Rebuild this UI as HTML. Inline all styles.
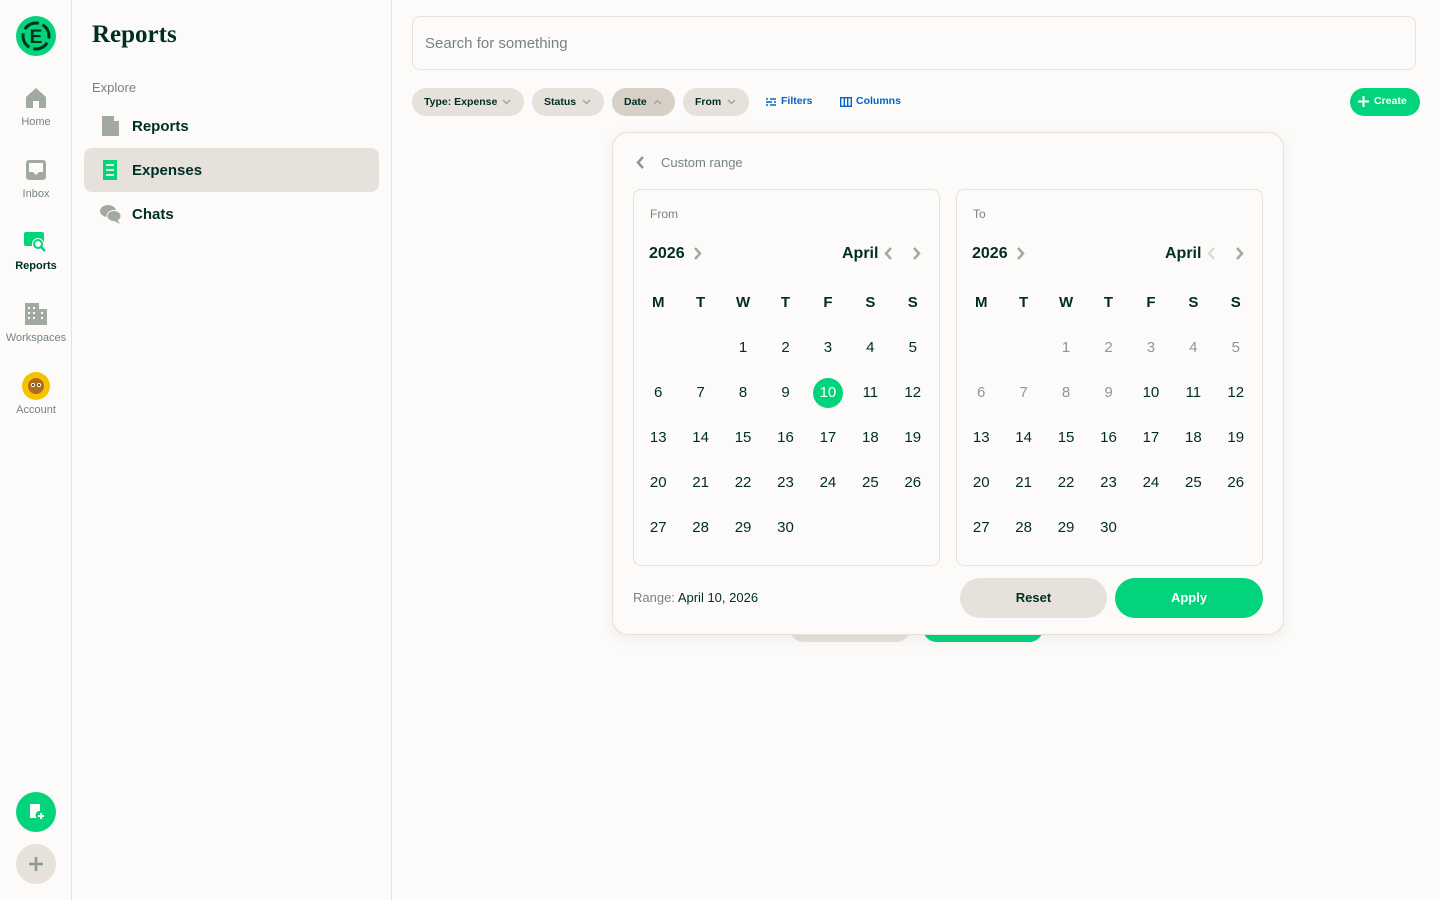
<!DOCTYPE html>
<html><head><meta charset="utf-8"><style>
*{box-sizing:border-box;margin:0;padding:0}
body{width:1440px;height:900px;background:#fcfbf9;font-family:"Liberation Sans",sans-serif;color:#002e22;position:relative;overflow:hidden}
.a{position:absolute}
.nav{left:0;top:0;width:72px;height:900px;border-right:1px solid #e6e1da}
.side{left:72px;top:0;width:320px;height:900px;border-right:1px solid #e6e1da}
.nl{position:absolute;left:0;width:72px;text-align:center;font-size:11px;color:#76847e}
.chip{position:absolute;top:88px;height:28px;border-radius:14px;background:#e6e1da;font-size:10.5px;font-weight:bold;line-height:28px;padding-left:12px}
.chip svg{position:absolute;top:11px}
.card{position:absolute;top:189px;width:307px;height:377px;border:1px solid #e6e1da;border-radius:8px}
.grid{position:absolute;top:280px;width:297px;display:grid;grid-template-columns:repeat(7,1fr);grid-auto-rows:45px;font-size:15px;text-align:center;line-height:45px}
.grid b{font-weight:bold}
.g{color:#8a9a93}
.sel{display:inline-block;width:30px;height:30px;border-radius:15px;background:#03d47c;color:#fff;line-height:30px;margin-top:7.5px}
</style></head><body>
<div class="a nav">
 <svg class="a" style="left:16px;top:16px" width="40" height="40" viewBox="0 0 40 40"><circle cx="20" cy="20" r="20" fill="#03d47c"/><circle cx="20" cy="20" r="13" stroke="#002e22" stroke-width="3" fill="none" stroke-dasharray="16 4.4" transform="rotate(-60 20 20)"/><text x="20" y="27" text-anchor="middle" font-family="Liberation Sans" font-weight="bold" font-size="19" fill="#002e22">E</text></svg>
 <svg class="a" style="left:25px;top:87px" width="22" height="22" viewBox="0 0 22 22"><path d="M11 1L1 10v11h7v-7h6v7h7V10z" fill="#a2a9a3"/></svg>
 <div class="nl" style="top:116px">Home</div>
 <svg class="a" style="left:25px;top:159px" width="22" height="22" viewBox="0 0 22 22"><rect x="1" y="1" width="20" height="20" rx="3" fill="#a2a9a3"/><path d="M4 4h14v9h-4l-3 3-3-3H4z" fill="#fcfbf9"/></svg>
 <div class="nl" style="top:188px">Inbox</div>
 <svg class="a" style="left:24px;top:231px" width="24" height="24" viewBox="0 0 24 24"><rect x="0" y="1" width="20" height="14" rx="2" fill="#03d47c"/><circle cx="14" cy="13" r="6" fill="#fcfbf9"/><circle cx="14" cy="13" r="4" fill="none" stroke="#03d47c" stroke-width="2"/><path d="M17 16l4 4" stroke="#03d47c" stroke-width="2.5"/></svg>
 <div class="nl" style="top:260px;color:#002e22;font-weight:bold">Reports</div>
 <svg class="a" style="left:25px;top:303px" width="22" height="22" viewBox="0 0 22 22"><rect x="0" y="0" width="14" height="22" fill="#a2a9a3"/><rect x="14" y="6" width="8" height="16" fill="#a2a9a3"/><g fill="#fcfbf9"><rect x="3" y="4" width="2" height="2"/><rect x="8" y="4" width="2" height="2"/><rect x="3" y="9" width="2" height="2"/><rect x="8" y="9" width="2" height="2"/><rect x="16" y="9" width="2" height="2"/><rect x="3" y="14" width="2" height="2"/><rect x="8" y="14" width="2" height="2"/><rect x="16" y="14" width="2" height="2"/></g></svg>
 <div class="nl" style="top:332px">Workspaces</div>
 <svg class="a" style="left:22px;top:372px" width="28" height="28" viewBox="0 0 28 28"><circle cx="14" cy="14" r="14" fill="#f5c400"/><circle cx="14" cy="14" r="8" fill="#b06a1c"/><circle cx="11" cy="13" r="2" fill="#fff"/><circle cx="17" cy="13" r="2" fill="#fff"/><circle cx="11" cy="13" r="1" fill="#002e22"/><circle cx="17" cy="13" r="1" fill="#002e22"/></svg>
 <div class="nl" style="top:404px">Account</div>
 <div class="a" style="left:16px;top:792px;width:40px;height:40px;border-radius:20px;background:#03d47c"></div>
 <svg class="a" style="left:29px;top:804px" width="16" height="16" viewBox="0 0 16 16"><path d="M1 0h10v7a4 4 0 0 0-3 7H1z" fill="#fff"/><path d="M12 9v6M9 12h6" stroke="#fff" stroke-width="2"/></svg>
 <div class="a" style="left:16px;top:844px;width:40px;height:40px;border-radius:20px;background:#e6e1da"></div>
 <svg class="a" style="left:28px;top:856px" width="16" height="16" viewBox="0 0 16 16"><path d="M8 1v14M1 8h14" stroke="#8a9a93" stroke-width="2.5"/></svg>
</div>
<div class="a side">
 <div class="a" style="left:20px;top:21px;font-family:'Liberation Serif',serif;font-size:25px;font-weight:bold;color:#002e22">Reports</div>
 <div class="a" style="left:20px;top:80px;font-size:13px;color:#76847e">Explore</div>
 <svg class="a" style="left:30px;top:116px" width="18" height="20" viewBox="0 0 18 20"><path d="M1 0h11l5 5v14a1 1 0 0 1-1 1H1a1 1 0 0 1-1-1V1a1 1 0 0 1 1-1z" fill="#a2a9a3"/><path d="M12 0v5h5" fill="#fcfbf9"/></svg>
 <div class="a" style="left:60px;top:118px;font-size:15px;font-weight:bold">Reports</div>
 <div class="a" style="left:12px;top:148px;width:295px;height:44px;border-radius:8px;background:#e6e1da"></div>
 <svg class="a" style="left:30px;top:160px" width="16" height="20" viewBox="0 0 16 20"><path d="M1 0h14v20H1z" fill="#03d47c"/><path d="M4 5h8M4 10h8M4 15h8" stroke="#e6e1da" stroke-width="2"/></svg>
 <div class="a" style="left:60px;top:162px;font-size:15px;font-weight:bold">Expenses</div>
 <svg class="a" style="left:28px;top:204px" width="22" height="20" viewBox="0 0 22 20"><ellipse cx="8" cy="7" rx="8" ry="6" fill="#a2a9a3"/><ellipse cx="14" cy="12" rx="7" ry="5.5" fill="#a2a9a3" stroke="#fcfbf9" stroke-width="1"/><path d="M17 15l3 5-6-3z" fill="#a2a9a3"/></svg>
 <div class="a" style="left:60px;top:206px;font-size:15px;font-weight:bold">Chats</div>
</div>
<div class="a" style="left:412px;top:16px;width:1004px;height:54px;border:1px solid #e6e1da;border-radius:8px;font-size:15px;color:#76847e;line-height:54px;padding-left:12px">Search for something</div>
<div class="chip" style="left:412px;width:112px">Type: Expense<svg style="left:90px" width="9" height="6" viewBox="0 0 9 6"><path d="M1 1l3.5 3.5L8 1" stroke="#a2a9a3" stroke-width="1.5" fill="none"/></svg></div>
<div class="chip" style="left:532px;width:72px">Status<svg style="left:50px" width="9" height="6" viewBox="0 0 9 6"><path d="M1 1l3.5 3.5L8 1" stroke="#a2a9a3" stroke-width="1.5" fill="none"/></svg></div>
<div class="chip" style="left:612px;width:63px;background:#d7d0c6">Date<svg style="left:41px" width="9" height="6" viewBox="0 0 9 6"><path d="M1 5l3.5-3.5L8 5" stroke="#a2a9a3" stroke-width="1.5" fill="none"/></svg></div>
<div class="chip" style="left:683px;width:66px">From<svg style="left:44px" width="9" height="6" viewBox="0 0 9 6"><path d="M1 1l3.5 3.5L8 1" stroke="#a2a9a3" stroke-width="1.5" fill="none"/></svg></div>
<svg class="a" style="left:766px;top:98px" width="10" height="8" viewBox="0 0 10 8"><path d="M0 1h2M4 1h6M0 4h6M8 4h2M0 7h2M4 7h6" stroke="#0164c7" stroke-width="1.4"/></svg>
<div class="a" style="left:781px;top:95px;font-size:10.5px;font-weight:bold;color:#0164c7">Filters</div>
<svg class="a" style="left:840px;top:97px" width="12" height="10" viewBox="0 0 12 10"><rect x="0.7" y="0.7" width="10.6" height="8.6" fill="none" stroke="#0164c7" stroke-width="1.4"/><path d="M4.3 1v8M7.7 1v8" stroke="#0164c7" stroke-width="1.4"/></svg>
<div class="a" style="left:856px;top:95px;font-size:10.5px;font-weight:bold;color:#0164c7">Columns</div>
<div class="a" style="left:1350px;top:88px;width:70px;height:28px;border-radius:14px;background:#03d47c;color:#fff;font-size:10.5px;font-weight:bold;line-height:27px;padding-left:24px">Create</div>
<svg class="a" style="left:1358px;top:96px" width="11" height="11" viewBox="0 0 11 11"><path d="M5.5 0v11M0 5.5h11" stroke="#fff" stroke-width="2"/></svg>

<div class="a" style="left:790px;top:615px;width:120px;height:27px;border-radius:14px;background:#e6e1da"></div>
<div class="a" style="left:923px;top:615px;width:120px;height:27px;border-radius:14px;background:#03d47c"></div>

<div class="a" style="left:612px;top:132px;width:672px;height:503px;border:1px solid #e6e1da;border-radius:16px;background:#fcfbf9;box-shadow:0 4px 16px rgba(0,0,0,0.06)"></div>
<svg class="a" style="left:635px;top:155px" width="10" height="15" viewBox="0 0 10 15"><path d="M8 2L3 7.5 8 13" stroke="#8a9a93" stroke-width="2.5" fill="none"/></svg>
<div class="a" style="left:661px;top:155px;font-size:13px;color:#76847e">Custom range</div>

<div class="card" style="left:633px"></div>
<div class="card" style="left:956px"></div>
<div class="a" style="left:650px;top:207px;font-size:12px;color:#76847e">From</div>
<div class="a" style="left:973px;top:207px;font-size:12px;color:#76847e">To</div>
<div class="a" style="left:649px;top:245px;font-size:16px;font-weight:bold">2026</div>
<div class="a" style="left:972px;top:245px;font-size:16px;font-weight:bold">2026</div>
<div class="a" style="left:842px;top:245px;font-size:16px;font-weight:bold">April</div>
<div class="a" style="left:1165px;top:245px;font-size:16px;font-weight:bold">April</div>
<svg class="a" style="left:693px;top:246px" width="10" height="15" viewBox="0 0 10 15"><path d="M2 2l5 5.5L2 13" stroke="#a2a9a3" stroke-width="2.5" fill="none"/></svg>
<svg class="a" style="left:1016px;top:246px" width="10" height="15" viewBox="0 0 10 15"><path d="M2 2l5 5.5L2 13" stroke="#a2a9a3" stroke-width="2.5" fill="none"/></svg>
<svg class="a" style="left:883px;top:246px" width="10" height="15" viewBox="0 0 10 15"><path d="M8 2L3 7.5 8 13" stroke="#a2a9a3" stroke-width="2.5" fill="none"/></svg>
<svg class="a" style="left:912px;top:246px" width="10" height="15" viewBox="0 0 10 15"><path d="M2 2l5 5.5L2 13" stroke="#a2a9a3" stroke-width="2.5" fill="none"/></svg>
<svg class="a" style="left:1206px;top:246px" width="10" height="15" viewBox="0 0 10 15"><path d="M8 2L3 7.5 8 13" stroke="#dcdcd8" stroke-width="2.5" fill="none"/></svg>
<svg class="a" style="left:1235px;top:246px" width="10" height="15" viewBox="0 0 10 15"><path d="M2 2l5 5.5L2 13" stroke="#a2a9a3" stroke-width="2.5" fill="none"/></svg>

<div class="grid" style="left:637px">
<b>M</b><b>T</b><b>W</b><b>T</b><b>F</b><b>S</b><b>S</b>
<span></span><span></span><span>1</span><span>2</span><span>3</span><span>4</span><span>5</span>
<span>6</span><span>7</span><span>8</span><span>9</span><span><span class="sel">10</span></span><span>11</span><span>12</span>
<span>13</span><span>14</span><span>15</span><span>16</span><span>17</span><span>18</span><span>19</span>
<span>20</span><span>21</span><span>22</span><span>23</span><span>24</span><span>25</span><span>26</span>
<span>27</span><span>28</span><span>29</span><span>30</span>
</div>
<div class="grid" style="left:960px">
<b>M</b><b>T</b><b>W</b><b>T</b><b>F</b><b>S</b><b>S</b>
<span></span><span></span><span class="g">1</span><span class="g">2</span><span class="g">3</span><span class="g">4</span><span class="g">5</span>
<span class="g">6</span><span class="g">7</span><span class="g">8</span><span class="g">9</span><span>10</span><span>11</span><span>12</span>
<span>13</span><span>14</span><span>15</span><span>16</span><span>17</span><span>18</span><span>19</span>
<span>20</span><span>21</span><span>22</span><span>23</span><span>24</span><span>25</span><span>26</span>
<span>27</span><span>28</span><span>29</span><span>30</span>
</div>

<div class="a" style="left:633px;top:590px;font-size:13px;color:#76847e">Range: <span style="color:#002e22">April 10, 2026</span></div>
<div class="a" style="left:960px;top:578px;width:147px;height:40px;border-radius:20px;background:#e6e1da;text-align:center;line-height:40px;font-size:13px;font-weight:bold">Reset</div>
<div class="a" style="left:1115px;top:578px;width:148px;height:40px;border-radius:20px;background:#03d47c;color:#fff;text-align:center;line-height:40px;font-size:13px;font-weight:bold">Apply</div>
</body></html>
